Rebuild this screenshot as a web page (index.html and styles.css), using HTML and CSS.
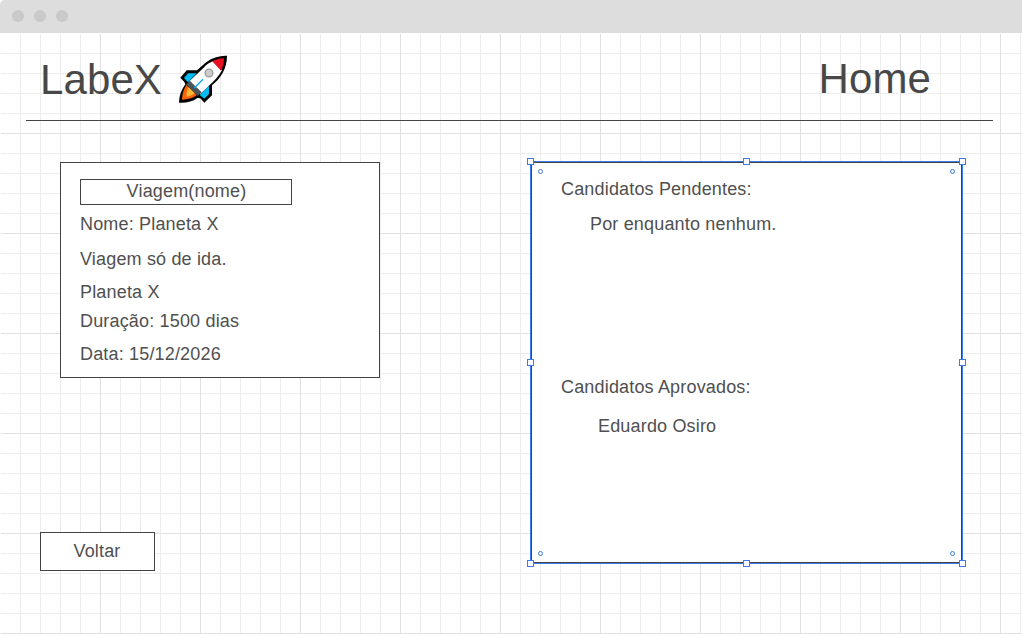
FILE: index.html
```html
<!DOCTYPE html>
<html lang="pt-BR">
<head>
<meta charset="utf-8">
<title>LabeX</title>
<link rel="stylesheet" href="styles.css">
</head>
<body>
<div class="window-bar"><span class="dot"></span><span class="dot"></span><span class="dot"></span></div>
<main class="canvas">
  <header class="header">
    <div class="brand">
      <h1 class="title">LabeX</h1>
      <svg class="rocket" viewBox="0 0 198 198" aria-hidden="true">
        <path fill="#000" d="M171 29C143 28 117 39 99 57L81 73H50L31 95L43 108L46 115C34 131 27 150 27 170C50 171 68 167 82 156L91 157L103 170L126 148V118C150 98 171 70 171 29Z"/>
        <path fill="#00bcf2" d="M54 82H80L54 109L42 96Z"/>
        <path fill="#00bcf2" d="M117 119V144L103 158L89 147Z"/>
        <path fill="#fff" d="M58 106L101 65C109 56 118 50 128 46L156 73C147 90 134 104 116 120L91 144Z"/>
        <path fill="#e81123" d="M127 46C138 40 150 37 162 37C162 50 159 62 153 74Z"/>
        <path fill="#4b545b" d="M60 105L95 139L83 150L48 115Z"/>
        <path fill="#f7630c" d="M49 117L80 148C67 157 53 161 36 161C36 146 41 130 49 117Z"/>
        <path fill="#ffb636" d="M56 124L74 142C67 148 59 151 50 152C48 142 51 132 56 124Z"/>
        <path stroke="#00adef" stroke-width="4" d="M73 126L99 100"/>
        <circle cx="117" cy="81" r="11.5" fill="#ccc" stroke="#999" stroke-width="4"/>
      </svg>
    </div>
    <nav class="home">Home</nav>
  </header>
  <div class="content">
    <div class="left">
      <section class="trip">
        <div class="trip-name">Viagem(nome)</div>
        <p class="line name">Nome: Planeta X</p>
        <p class="line description">Viagem só de ida.</p>
        <p class="line planet">Planeta X</p>
        <p class="line duration">Duração: 1500 dias</p>
        <p class="line date">Data: 15/12/2026</p>
      </section>
      <button class="back">Voltar</button>
    </div>
    <section class="candidates">
      <p class="line">Candidatos Pendentes:</p>
      <p class="line pending">Por enquanto nenhum.</p>
      <p class="line approved-title">Candidatos Aprovados:</p>
      <p class="line approved">Eduardo Osiro</p>
      <i class="handle top west"></i><i class="handle top center"></i><i class="handle top east"></i>
      <i class="handle middle west"></i><i class="handle middle east"></i>
      <i class="handle bottom west"></i><i class="handle bottom center"></i><i class="handle bottom east"></i>
      <i class="ring ring-top ring-west"></i><i class="ring ring-top ring-east"></i>
      <i class="ring ring-bottom ring-west"></i><i class="ring ring-bottom ring-east"></i>
    </section>
  </div>
</main>
</body>
</html>
```
FILE: styles.css
```css
* { box-sizing: border-box; }
body {
  margin: 0;
  width: 1022px;
  height: 634px;
  overflow: hidden;
  background: #fff;
  color: #505050;
  font: 18px/20px "Liberation Sans", Arial, sans-serif;
  letter-spacing: 0.17px;
}
.window-bar {
  height: 33px;
  padding: 10px 12px;
  display: flex;
  gap: 10px;
  background: #ddd;
  border-top-left-radius: 5px;
}
.dot { width: 12px; height: 12px; border-radius: 50%; background: #c9c9c9; }
.canvas {
  height: 600px;
  margin: 1px 0 0 1px;
  background-image:
    linear-gradient(to right, #e0e0e0 1px, transparent 1px),
    linear-gradient(to bottom, #e0e0e0 1px, transparent 1px),
    linear-gradient(to right, #ededed 1px, transparent 1px),
    linear-gradient(to bottom, #ededed 1px, transparent 1px);
  background-size: 100px 100px, 100px 100px, 20px 20px, 20px 20px;
  background-position: 99px 99px, 99px 99px, 19px 19px, 19px 19px;
}
.header {
  width: 967px;
  height: 87px;
  margin-left: 25px;
  padding: 12px 62px 0 14px;
  display: flex;
  justify-content: space-between;
  border-bottom: 1px solid #444;
  color: #484848;
}
.brand { display: flex; }
.title { margin: 10px 0 0; width: 130px; font-size: 42px; line-height: 48px; font-weight: 400; letter-spacing: 0.1px; }
.rocket { width: 66px; height: 66px; }
.home { margin-top: 9px; font-size: 42px; line-height: 48px; letter-spacing: 0.1px; }
.content { display: flex; justify-content: space-between; padding: 40px 59px 0 39px; }
.left { padding-top: 1px; }
.trip {
  width: 320px;
  height: 216px;
  margin-left: 20px;
  padding: 16px 19px;
  border: 1px solid #444;
  background: #fff;
}
.trip-name { width: 212px; height: 26px; padding-left: 1px; border: 1px solid #444; line-height: 22px; text-align: center; }
.line { margin: 0; line-height: 20px; white-space: nowrap; }
.name { margin-top: 9px; }
.description { margin-top: 15px; }
.planet { margin-top: 13px; }
.duration { margin-top: 9px; }
.date { margin-top: 13px; }
.back {
  display: block;
  width: 115px;
  height: 39px;
  margin-top: 154px;
  padding: 0 1px 1px 0;
  border: 1px solid #444;
  background: #fff;
  color: inherit;
  font: inherit;
  letter-spacing: inherit;
}
.candidates {
  position: relative;
  width: 433px;
  height: 403px;
  padding: 17px 30px;
  border: 1px solid #3d7be8;
  box-shadow: inset 0 0 0 1px #444;
  background: #fff;
}
.pending { margin: 15px 0 0 29px; }
.approved-title { margin-top: 143px; }
.approved { margin: 19px 0 0 37px; }
.handle { position: absolute; width: 7px; height: 7px; border: 1px solid #3d7be8; background: #fff; }
.top { top: -4px; }
.middle { top: 197px; }
.bottom { bottom: -4px; }
.west { left: -4px; }
.center { left: 212px; }
.east { right: -4px; }
.ring { position: absolute; width: 5px; height: 5px; border: 1px solid #3d7be8; border-radius: 50%; }
.ring-top { top: 7px; }
.ring-bottom { bottom: 7px; }
.ring-west { left: 7px; }
.ring-east { right: 7px; }
```
